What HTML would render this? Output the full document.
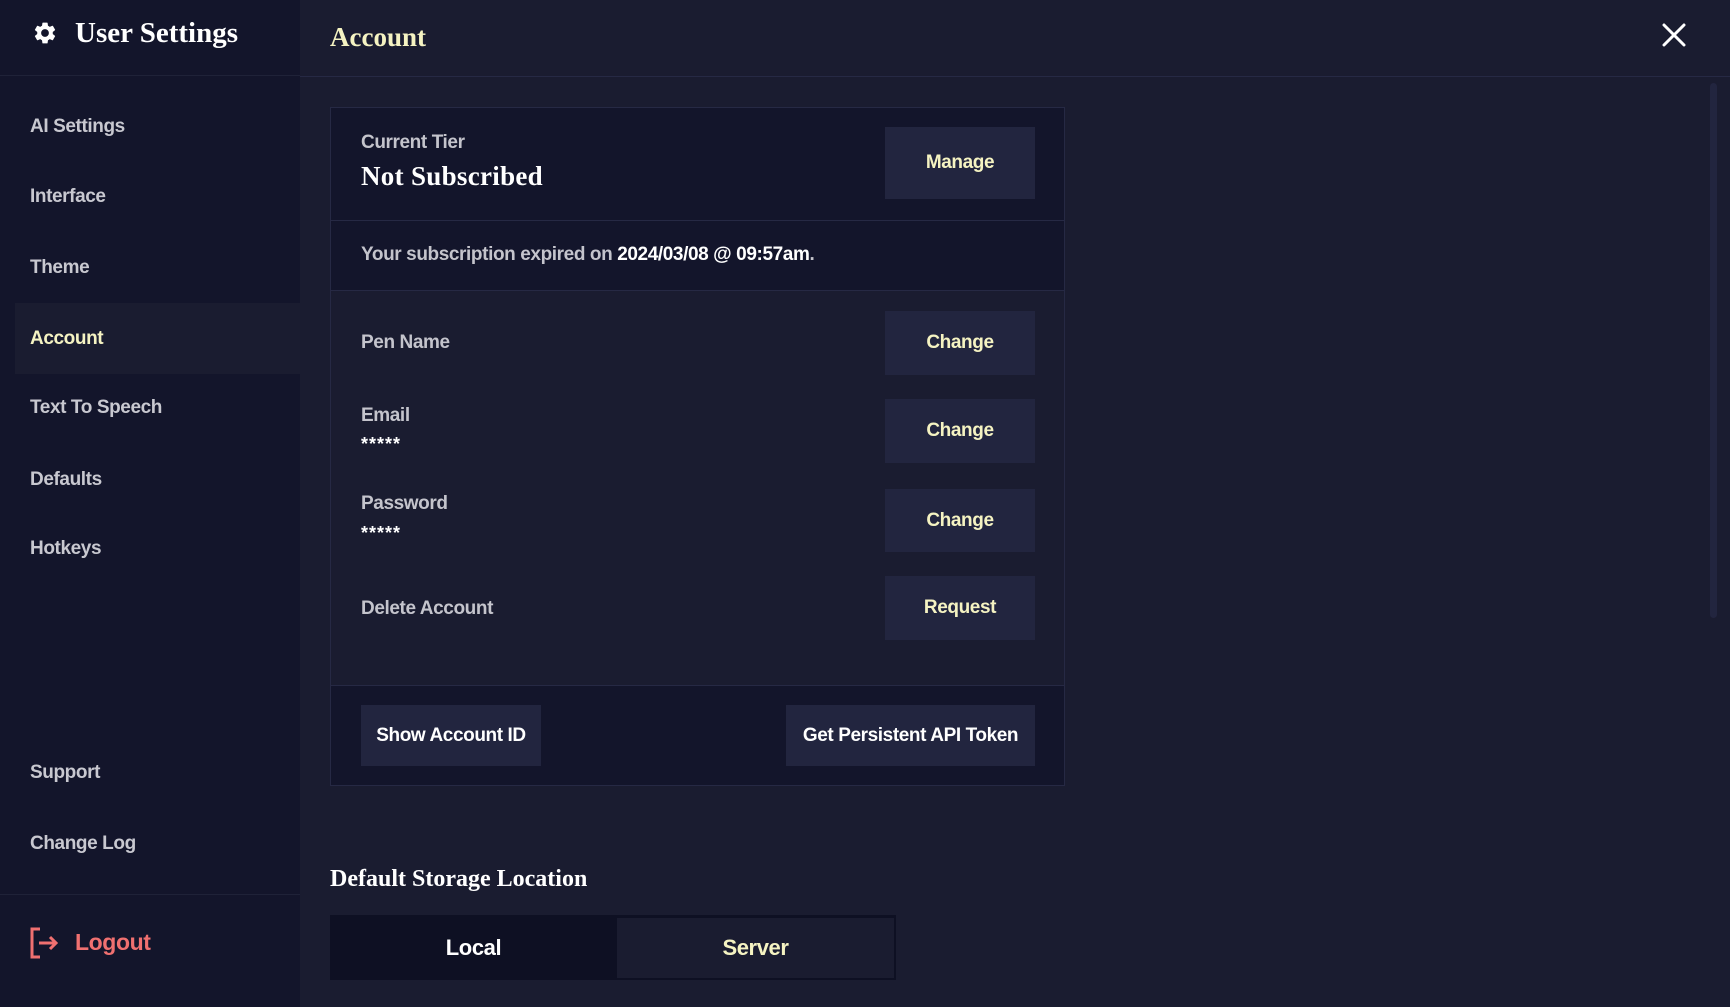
<!DOCTYPE html>
<html><head><meta charset="utf-8"><style>
*{margin:0;padding:0;box-sizing:border-box}
body{width:1730px;height:1007px;overflow:hidden;background:#1a1c30;font-family:"Liberation Sans",sans-serif;color:#fff;position:relative}
.sb{position:absolute;left:0;top:0;width:300px;height:1007px;background:#13152b}
.abs{position:absolute;white-space:nowrap}
.serif{font-family:"Liberation Serif",serif;font-weight:bold}
.nav{position:absolute;left:30px;font-size:19px;font-weight:bold;color:#c8c8d0;letter-spacing:-0.4px;line-height:24px}
.btn{position:absolute;background:#22253f;color:#f5f3c2;font-weight:bold;font-size:19px;letter-spacing:-0.4px;display:flex;align-items:center;justify-content:center}
.lbl{position:absolute;left:361px;font-size:19px;font-weight:bold;color:#c4c4cc;letter-spacing:-0.4px;line-height:24px}
.stars{position:absolute;left:361px;font-size:18px;font-weight:bold;color:#fff;letter-spacing:1px}
</style></head><body>
<div class="sb"></div>
<div class="abs" style="left:0;top:75px;width:300px;height:1px;background:#1f2238"></div>
<div class="abs" style="left:300px;top:76px;width:1430px;height:1px;background:#262944"></div>
<svg class="abs" style="left:32px;top:20px" width="26" height="26" viewBox="0 0 24 24"><path fill="#fff" d="M19.14 12.94c.04-.3.06-.61.06-.94s-.02-.64-.07-.94l2.030-1.58a.49.49 0 0 0 .12-.61l-1.92-3.32a.49.49 0 0 0-.59-.22l-2.39.96a7 7 0 0 0-1.62-.94l-.36-2.54a.48.48 0 0 0-.48-.41h-3.84a.48.48 0 0 0-.47.41l-.36 2.54c-.59.24-1.13.57-1.62.94l-2.39-.96a.48.48 0 0 0-.59.22L2.74 8.87a.47.47 0 0 0 .12.61l2.03 1.58c-.05.3-.09.63-.09.94s.02.64.07.94l-2.03 1.58a.49.49 0 0 0-.12.61l1.92 3.32c.12.22.37.29.59.22l2.39-.96c.5.38 1.03.7 1.62.94l.36 2.54c.05.24.24.41.48.41h3.84c.24 0 .44-.17.47-.41l.36-2.54c.59-.24 1.13-.56 1.62-.94l2.39.96c.22.08.47 0 .59-.22l1.92-3.32a.47.47 0 0 0-.12-.61l-2.01-1.58zM12 15.6A3.6 3.6 0 1 1 12 8.4a3.6 3.6 0 0 1 0 7.2z"/></svg>
<div class="abs serif" style="left:75px;top:15px;font-size:29px;line-height:36px">User Settings</div>
<div class="nav" style="top:115px">AI Settings</div>
<div class="nav" style="top:185px">Interface</div>
<div class="nav" style="top:256px">Theme</div>
<div class="abs" style="left:15px;top:303px;width:285px;height:71px;background:#1a1c30"></div>
<div class="nav" style="top:327px;color:#f5f3c2">Account</div>
<div class="nav" style="top:396px">Text To Speech</div>
<div class="nav" style="top:468px">Defaults</div>
<div class="nav" style="top:537px">Hotkeys</div>
<div class="nav" style="top:761px">Support</div>
<div class="nav" style="top:832px">Change Log</div>
<div class="abs" style="left:0;top:894px;width:300px;height:1px;background:#1f2238"></div>
<svg class="abs" style="left:29px;top:927px" width="32" height="32" viewBox="0 0 32 32" fill="none" stroke="#f07070" stroke-width="3"><path d="M11 2H3v28h8"/><path d="M10 16h17M21 10l6 6-6 6"/></svg>
<div class="abs" style="left:75px;top:929px;font-size:23px;font-weight:bold;color:#f07070;letter-spacing:-0.4px">Logout</div>

<div class="abs serif" style="left:330px;top:20px;font-size:27px;color:#f5f3c2;line-height:34px">Account</div>
<svg class="abs" style="left:1662px;top:23px" width="24" height="24" viewBox="0 0 24 24" stroke="#fff" stroke-width="3" stroke-linecap="round"><path d="M2 2l20 20M22 2L2 22"/></svg>
<div class="abs" style="left:1710px;top:83px;width:7px;height:535px;border-radius:4px;background:#22253f"></div>

<div class="abs" style="left:330px;top:107px;width:735px;height:679px;border:1px solid #262944;background:#1a1c30"></div>
<div class="abs" style="left:331px;top:108px;width:733px;height:112px;background:#13152b"></div>
<div class="abs" style="left:331px;top:220px;width:733px;height:1px;background:#262944"></div>
<div class="abs" style="left:331px;top:221px;width:733px;height:69px;background:#13152b"></div>
<div class="abs" style="left:331px;top:290px;width:733px;height:1px;background:#262944"></div>
<div class="abs" style="left:331px;top:685px;width:733px;height:1px;background:#262944"></div>
<div class="abs" style="left:331px;top:686px;width:733px;height:99px;background:#13152b"></div>

<div class="lbl" style="top:131px">Current Tier</div>
<div class="abs serif" style="left:361px;top:159px;font-size:27px;line-height:34px;letter-spacing:0.3px">Not Subscribed</div>
<div class="btn" style="left:885px;top:127px;width:150px;height:72px">Manage</div>
<div class="lbl" style="top:243px">Your subscription expired on <span style="color:#fff">2024/03/08 @ 09:57am</span>.</div>

<div class="lbl" style="top:331px">Pen Name</div>
<div class="btn" style="left:885px;top:311px;width:150px;height:64px">Change</div>
<div class="lbl" style="top:404px">Email</div>
<div class="stars" style="top:434px">*****</div>
<div class="btn" style="left:885px;top:399px;width:150px;height:64px">Change</div>
<div class="lbl" style="top:492px">Password</div>
<div class="stars" style="top:523px">*****</div>
<div class="btn" style="left:885px;top:489px;width:150px;height:63px">Change</div>
<div class="lbl" style="top:597px">Delete Account</div>
<div class="btn" style="left:885px;top:576px;width:150px;height:64px">Request</div>

<div class="btn" style="left:361px;top:705px;width:180px;height:61px;color:#fff">Show Account ID</div>
<div class="btn" style="left:786px;top:705px;width:249px;height:61px;color:#fff">Get Persistent API Token</div>

<div class="abs serif" style="left:330px;top:864px;font-size:24px;line-height:30px">Default Storage Location</div>
<div class="abs" style="left:330px;top:915px;width:566px;height:65px;background:#0e1023"></div>
<div class="abs" style="left:617px;top:918px;width:277px;height:60px;background:#1a1c30"></div>
<div class="abs" style="left:330px;top:935px;width:287px;text-align:center;font-size:22px;font-weight:bold;letter-spacing:-0.4px">Local</div>
<div class="abs" style="left:617px;top:935px;width:277px;text-align:center;font-size:22px;font-weight:bold;color:#f5f3c2;letter-spacing:-0.4px">Server</div>
</body></html>
